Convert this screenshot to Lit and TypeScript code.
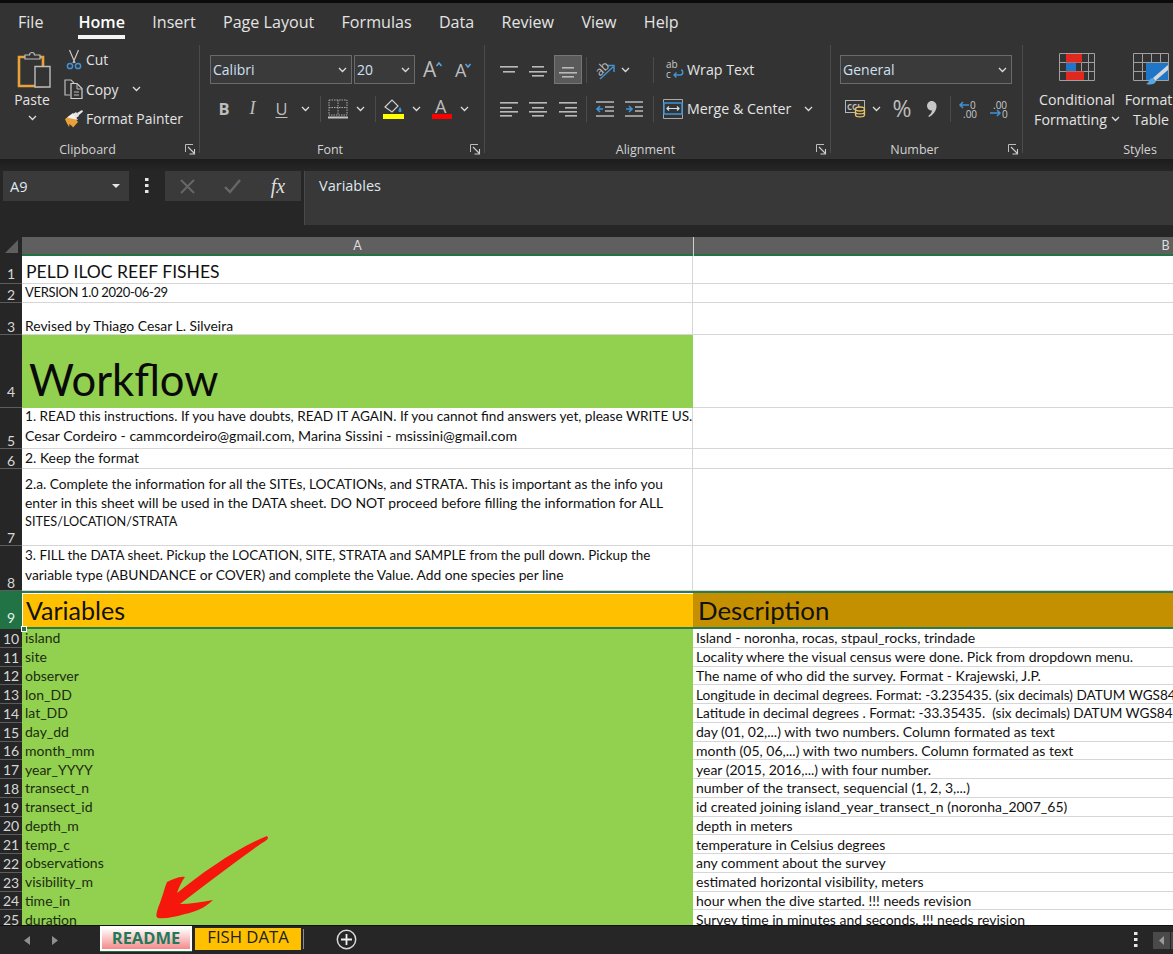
import { LitElement, html, css, svg } from "lit";
import { customElement } from "lit/decorators.js";

const chev = html`<svg class="chev" width="9" height="6" viewBox="0 0 9 6"><path d="M1 1l3.5 3.5L8 1" fill="none" stroke="#dcdcdc" stroke-width="1.3"/></svg>`;
const launcher = html`<svg width="11" height="11" viewBox="0 0 11 11"><path d="M.5 8V.5H8" fill="none" stroke="#bdbdbd"/><path d="M3 3l6 6M9.5 5v5h-5" fill="none" stroke="#cfcfcf" stroke-width="1.1"/></svg>`;

// horizontal text alignment icons, widths given per line
const lines = (rows: number[][], w = 18, h = 16, col = "#b9b9b9") => html`<svg width=${w} height=${h} viewBox="0 0 ${w} ${h}">${rows.map(
  ([y, x1, x2]) => svg`<rect x=${x1} y=${y} width=${x2 - x1} height="1.6" fill=${col}/>`
)}</svg>`;

// Each line carries its own size: the fallback font's capitals run wider than the original's
const rows = [
  { n: 1, h: 28, cls: "title", a: [["PELD ILOC REEF FISHES", 17.55]] },
  { n: 2, h: 19, cls: "tight", a: [["VERSION 1.0 2020-06-29", 13]] },
  { n: 3, h: 32, cls: "low", a: [["Revised by Thiago Cesar L. Silveira", 13.9]] },
  { n: 4, h: 73, cls: "workflow", a: [["Workflow", 43.5]] },
  { n: 5, h: 41, cls: "plain", a: [
    ["1. READ this instructions. If you have doubts, READ IT AGAIN. If you cannot find answers yet, please WRITE US.", 13.6],
    ["Cesar Cordeiro - cammcordeiro@gmail.com, Marina Sissini - msissini@gmail.com", 14.1],
  ] },
  { n: 6, h: 20, cls: "flat", a: [["2. Keep the format", 13.9]] },
  { n: 7, h: 77, cls: "tall", a: [
    ["2.a. Complete the information for all the SITEs, LOCATIONs, and STRATA. This is important as the info you", 13.73],
    ["enter in this sheet will be used in the DATA sheet. DO NOT proceed before filling the information for ALL", 13.91],
    ["SITES/LOCATION/STRATA", 12.71],
  ] },
  { n: 8, h: 45, cls: "up", a: [
    ["3. FILL the DATA sheet. Pickup the LOCATION, SITE, STRATA and SAMPLE from the pull down. Pickup the", 13.43],
    ["variable type (ABUNDANCE or COVER) and complete the Value. Add one species per line", 13.79],
  ] },
] as { n: number; h: number; cls: string; a: [string, number][] }[];

const vars: [string, string, string?][] = [
  ["island", "Island - noronha, rocas, stpaul_rocks, trindade"],
  ["site", "Locality where the visual census were done. Pick from dropdown menu."],
  ["observer", "The name of who did the survey. Format - Krajewski, J.P."],
  ["lon_DD", "Longitude in decimal degrees. Format: -3.235435. (six decimals) DATUM WGS84", "caps"],
  ["lat_DD", "Latitude in decimal degrees . Format: -33.35435.  (six decimals) DATUM WGS84", "caps"],
  ["day_dd", "day (01, 02,...) with two numbers. Column formated as text"],
  ["month_mm", "month (05, 06,...) with two numbers. Column formated as text"],
  ["year_YYYY", "year (2015, 2016,...) with four number."],
  ["transect_n", "number of the transect, sequencial (1, 2, 3,...)"],
  ["transect_id", "id created joining island_year_transect_n (noronha_2007_65)"],
  ["depth_m", "depth in meters"],
  ["temp_c", "temperature in Celsius degrees"],
  ["observations", "any comment about the survey"],
  ["visibility_m", "estimated horizontal visibility, meters"],
  ["time_in", "hour when the dive started. !!! needs revision"],
  ["duration", "Survey time in minutes and seconds. !!! needs revision"],
];

@customElement("app-root")
export class AppRoot extends LitElement {
  static styles = css`
    :host {
      display: flex;
      flex-direction: column;
      width: 1173px;
      height: 954px;
      overflow: hidden;
      background: #262626;
      font-family: "Open Sans", "Noto Sans", sans-serif;
      color: #e4e4e4;
    }
    svg { display: block; flex: none; overflow: visible; }

    /* tabs */
    .menu {
      background: #333;
      border-top: 3px solid #0a0a0a;
      height: 42px;
      display: flex;
      gap: 27.3px;
      padding-left: 18px;
      font-size: 16.1px;
      flex: none;
      box-sizing: content-box;
    }
    .menu span { padding-top: 9px; line-height: 21px; height: 33px; box-sizing: border-box; white-space: nowrap; }
    .menu .file { margin-right: 7.7px; }
    .menu .active { font-weight: 600; color: #fff; border-bottom: 4px solid #f4f4f4; height: 36px; }

    /* ribbon */
    .ribbon { display: flex; height: 114px; background: #333; overflow: hidden; flex: none; font-size: 13.9px; }
    .group { position: relative; display: flex; flex-direction: column; flex: none; box-sizing: border-box; }
    .group::after { content: ""; position: absolute; right: 0; top: 0; bottom: 6px; width: 1px; background: #4b4b4b; }
    .clip { width: 200px; }
    .font { width: 285px; }
    .align { width: 346px; }
    .num { width: 192px; }
    .styles { width: 234px; }
    .styles::after { display: none; }
    .body { height: 94px; flex: none; }
    .label { height: 20px; display: flex; align-items: center; font-size: 12.5px; color: #d2d2d2; }
    .label span { flex: 1; text-align: center; }
    .label .lz { width: 25px; flex: none; display: flex; align-items: center; }
    .label .lz svg { margin-left: 10px; }

    .clip .body { display: flex; }
    .paste { width: 62px; display: flex; flex-direction: column; align-items: center; padding-top: 4px; padding-left: 2px; box-sizing: border-box; }
    .paste svg.pic { margin-left: 4px; }
    .paste .pt { margin-top: 1px; line-height: 20px; }
    .paste .chev { margin-top: 5px; }
    .small { display: grid; grid-template-rows: 29px 30px 29px; }
    .small div { display: grid; grid-template-columns: 24px auto 16px; align-items: center; justify-items: center; justify-content: start; white-space: nowrap; }
    .small span { justify-self: start; }
    .small .chev { margin-left: 20px; }

    .tb { display: grid; align-items: center; justify-items: center; height: 29px; }
    .sep { width: 1px; height: 26px; background: #4b4b4b; }
    .sep.end { justify-self: end; }
    .font .body, .align .body, .num .body { padding-top: 10px; box-sizing: border-box; display: flex; flex-direction: column; gap: 10px; }
    .font .body { padding-left: 10px; }
    .align .body { padding-left: 9px; }
    .num .body { padding-left: 9px; }

    .tb.f1 { grid-template-columns: 142px 2px 61px 8px 19px 13px 15px; justify-items: stretch; }
    .tb.f2 { grid-template-columns: 28px 29px 29px 18px 12px 24px 20px 10px 26px 20px 32px 12px; }
    .tb.a1 { grid-template-columns: 29px 29px 31px 6px 32px 8px 25px 8px 25px 1fr; }
    .tb.a2 { grid-template-columns: 29px 29px 31px 6px 32px 26px 7px 4px 29px 1fr; }
    .tb.n2 { grid-template-columns: 24px 18px 34px 26px 10px 27px 33px; padding-left: 3px; }

    .select {
      display: flex; align-items: center; justify-content: space-between;
      height: 29px; box-sizing: border-box; padding: 0 4px 0 2px;
      background: #3a3a3a; border: 1px solid #6a6a6a; font-size: 14px; color: #cfe0f2;
    }
    .numsel { width: 172px; }
    .tb.n1 { justify-items: start; }
    .on { width: 28px; height: 29px; box-sizing: border-box; background: #5a5a5a; border: 1px solid #767676; display: flex; align-items: center; justify-content: center; }
    .btxt { font-weight: 700; font-size: 16.5px; color: #bdbdbd; }
    .itxt { font-style: italic; font-size: 18px; color: #bdbdbd; font-family: "Liberation Serif", serif; }
    .utxt { font-size: 16.5px; color: #bdbdbd; text-decoration: underline; text-underline-offset: 2px; }
    .pct { font-size: 23px; color: #bdbdbd; line-height: 1; }
    .lbl { justify-self: start; white-space: nowrap; display: flex; align-items: center; font-size: 14.2px; }
    .merge .chev { margin-left: 13px; }
    .cols { display: flex; justify-content: flex-start; padding-left: 7px; }
    .big { display: flex; flex-direction: column; align-items: center; font-size: 14.2px; line-height: 19.5px; white-space: nowrap; }
    .big svg.pic { margin: 8px 0 9px; }
    .big.cf { width: 94px; }
    .big.ft { width: 54px; }
    .big.ft svg.pic { margin-bottom: 4px; }
    .big.ft .chev { margin-right: -13px; }
    .big.ft .fm { margin-right: 5px; }
    .big span { display: flex; align-items: center; gap: 4px; }

    /* formula bar */
    .shade { height: 12px; background: linear-gradient(#1c1c1c, #262626); flex: none; }
    .fbar { height: 54px; display: flex; flex: none; padding-left: 3px; }
    .name { width: 126px; height: 30px; background: #3a3a3a; display: flex; align-items: center; justify-content: space-between; box-sizing: border-box; padding: 0 9px 0 7px; font-size: 14.5px; color: #dfeaf5; }
    .dots { width: 36px; height: 30px; display: flex; align-items: center; justify-content: center; }
    .fx { width: 136px; height: 30px; background: #3a3a3a; display: grid; grid-template-columns: 44px 46px 46px; align-items: center; justify-items: center; font-family: "Liberation Serif", serif; font-style: italic; font-size: 20px; color: #dedede; }
    .input { flex: 1; margin-left: 3px; background: #383838; font-size: 14.5px; padding: 5px 0 0 14px; color: #dfe6ee; line-height: 20px; border-left: 1px solid #4a4a4a; }
    .gap { height: 12px; flex: none; }

    /* sheet */
    .sheet { position: relative; flex: 1; min-height: 0; overflow: hidden; background: #fff; font-family: Lato, "Liberation Sans", sans-serif; color: #111; }
    .colhead { display: grid; grid-template-columns: 22px 671px 944px; height: 19px; background: #5f5f5f; font-size: 12.5px; color: #ddd; box-shadow: inset 0 -2px 0 #217346; text-align: center; line-height: 17px; }
    .corner { background: #262626; display: flex; align-items: center; justify-content: center; height: 19px; }
    .colhead .b { border-left: 1px solid #cfcfcf; }
    .row { display: grid; grid-template-columns: 22px 671px 944px; box-sizing: border-box; }
    .rh { background: #262626; color: #d6d6d6; font-size: 14px; display: flex; align-items: flex-end; justify-content: center; box-sizing: border-box; border-bottom: 1px solid #5c5c5c; line-height: 15px; }
    .cell { box-sizing: border-box; border-bottom: 1px solid #d6d6d6; border-right: 1px solid #d6d6d6; padding: 0 0 0 3px; display: flex; align-items: flex-end; white-space: pre; font-size: 14px; line-height: 19px; overflow: hidden; }
    .cell.caps { font-size: 13.6px; }
    .cell.plain { padding-bottom: 3px; }
    .cell.flat { padding-bottom: 1px; }
    .cell.tight { padding-bottom: 1px; line-height: 17px; letter-spacing: -0.34px; }
    .cell.low { padding-bottom: 1px; line-height: 15px; }
    .cell.up { padding-bottom: 6px; }
    .cell.title { padding-left: 4px; line-height: 22px; }
    .cell.tall { padding-bottom: 14px; }
    .cell.workflow { background: #92d050; line-height: 50px; padding: 0 0 3px 7px; border-color: #92d050; color: #0a0a0a; }
    .r1 .rh { padding-bottom: 2px; }
    .r4 .rh { padding-bottom: 8px; }
    .sel { height: 38px; position: relative; }
    .sel .rh { background: #217346; color: #e6f2ec; border-bottom: 0; padding-bottom: 4px; }
    .sel .cell { font-size: 25px; padding: 0 0 0 4px; border-top: 2px solid #2a7a52; border-bottom: 2px solid #2a7a52; border-right: 0; line-height: 32px; color: #111; align-items: center; }
    .sel .a { background: #ffc000; box-shadow: inset 1px 0 0 #fff, inset 0 1px 0 #fff; }
    .sel .d { background: #c59000; padding-left: 5px; font-size: 25.8px; }
    .handle { position: absolute; left: 21px; bottom: -3px; width: 6px; height: 6px; background: #217346; border: 1px solid #fff; box-sizing: border-box; }
    .v { height: 18.75px; }
    .v .a { background: #92d050; border-color: #92d050; color: #1c2c10; }
    .v .cell { line-height: 18px; padding-top: 1px; align-items: center; }
    .v .rh { align-items: center; padding-top: 1px; }
    .arrow { position: absolute; left: 0; top: 0; pointer-events: none; }

    /* bottom tabs */
    .tabs { height: 29px; flex: none; display: flex; align-items: flex-start; background: #262626; position: relative; border-top: 1px solid #111; box-sizing: border-box; font-size: 16.7px; }
    .nav { width: 100px; height: 28px; display: grid; grid-template-columns: 30px 28px; align-items: center; justify-items: end; flex: none; }
    .readme { width: 92px; height: 25px; box-sizing: border-box; border: 2px solid #fff; background: linear-gradient(#fff, #f48a8a); color: #1f7a5a; font-weight: 700; font-size: 16.5px; text-align: center; line-height: 19px; box-shadow: 0 1px 0 #217346; flex: none; }
    .fish { margin: 2px 0 0 3px; width: 106px; height: 22px; background: #ffc000; color: #222; text-align: center; line-height: 17px; flex: none; }
    .tsep { width: 1px; height: 20px; margin: 3px 0 0 2px; background: #8d8d8d; flex: none; }
    .plus { margin: 3px 0 0 32px; flex: none; }
    .tright { margin-left: auto; display: flex; align-items: center; height: 28px; }
    .tright .tdots { margin-right: 15px; }
    .sbtn { width: 17px; height: 17px; background: #4a4a4a; display: flex; align-items: center; justify-content: center; margin-right: 1px; }
    .sbtn2 { width: 2px; height: 17px; background: #4a4a4a; }
  `;

  private ribbon() {
    return html`<div class="ribbon">
      <div class="group clip">
        <div class="body">
          <div class="paste">
            <svg class="pic" width="36" height="40" viewBox="0 0 36 40"><path d="M3 8h24v29H3z" fill="#333" stroke="#e9a23b" stroke-width="2.6"/><path d="M9 10V6h4.5a2.5 2.5 0 0 1 5 0H24v4z" fill="#333" stroke="#bdbdbd" stroke-width="1.2"/><path d="M19 17.5h15V38H19z" fill="#333" stroke="#bdbdbd" stroke-width="1.4"/></svg>
            <span class="pt">Paste</span>
            ${chev}
          </div>
          <div class="small">
            <div>
              <svg width="16" height="21" viewBox="0 0 16 21"><path d="M3.5 1l5.5 13M12.5 1L7 14" fill="none" stroke="#c9c9c9" stroke-width="1.2"/><circle cx="4" cy="17" r="2.6" fill="none" stroke="#3f93d6" stroke-width="1.5"/><circle cx="12" cy="17" r="2.6" fill="none" stroke="#3f93d6" stroke-width="1.5"/></svg>
              <span>Cut</span>
            </div>
            <div>
              <svg width="20" height="20" viewBox="0 0 20 20"><path d="M6 16H1V1h6l3 3" fill="none" stroke="#bdbdbd" stroke-width="1.2"/><path d="M7 4.5h6l5 5v10H7z" fill="#333" stroke="#d0d0d0" stroke-width="1.2"/><path d="M13 5v5h5M10 13h5M10 16h5" fill="none" stroke="#bdbdbd"/></svg>
              <span>Copy</span>
              ${chev}
            </div>
            <div>
              <svg width="20" height="19" viewBox="0 0 20 19"><path d="M1 10l7-5 6 8-5 5.5c-1-2-3-3-4-3.5 1 2 0 3 0 3C4 16 2 13 1 10z" fill="#e9a23b"/><path d="M3 8.5l6-4.500 5 7" fill="#f2f2f2"/><path d="M9 5l3-2 3 4-3 2zM13 4l5-3 1 1.500-4.500 4" fill="#e6e6e6"/></svg>
              <span>Format Painter</span>
            </div>
          </div>
        </div>
        <div class="label"><span>Clipboard</span><div class="lz">${launcher}</div></div>
      </div>

      <div class="group font">
        <div class="body">
          <div class="tb f1">
            <div class="select"><span>Calibri</span>${chev}</div>
            <i></i>
            <div class="select"><span>20</span>${chev}</div>
            <i></i>
            <svg width="20" height="18" viewBox="0 0 20 18"><text x="0" y="16" font-size="21" fill="#bdbdbd" font-family="Open Sans">A</text><path d="M13.500 5l2.500-3 2.500 3" fill="none" stroke="#58a6e0" stroke-width="1.500"/></svg>
            <i></i>
            <svg width="16" height="16" viewBox="0 0 16 16"><text x="0" y="15" font-size="18" fill="#bdbdbd" font-family="Open Sans">A</text><path d="M10.500 2l2.500 3 2.500-3" fill="none" stroke="#58a6e0" stroke-width="1.500"/></svg>
          </div>
          <div class="tb f2">
            <span class="btxt">B</span>
            <span class="itxt">I</span>
            <span class="utxt">U</span>
            ${chev}
            <i class="sep"></i>
            <svg width="20" height="20" viewBox="0 0 20 20"><path d="M1 1h18v15H1zM10 1v15M1 8.500h18" fill="none" stroke="#a9a9a9" stroke-dasharray="1.500 1"/><rect y="17.500" width="20" height="2" fill="#c4c4c4"/></svg>
            ${chev}
            <i class="sep"></i>
            <svg width="21" height="20" viewBox="0 0 21 20"><path d="M2 8l7-7 6 6-6 6z" fill="none" stroke="#d0d0d0" stroke-width="1.200"/><path d="M17 8c2 3 2 5 0 5s-2-2 0-5" fill="#3f93d6"/><rect y="15" width="21" height="5" fill="#ffff00"/></svg>
            ${chev}
            <svg width="20" height="20" viewBox="0 0 20 20"><text x="3" y="13.500" font-size="18" fill="#bdbdbd" font-family="Open Sans">A</text><rect y="15" width="20" height="5" fill="#ff0000"/></svg>
            ${chev}
          </div>
        </div>
        <div class="label"><span>Font</span><div class="lz">${launcher}</div></div>
      </div>

      <div class="group align">
        <div class="body">
          <div class="tb a1">
            ${lines([[3, 0, 18], [8, 3, 15]], 18, 14)}
            ${lines([[4, 3, 15], [9, 0, 18], [13, 3, 15]], 18, 16)}
            <div class="on">${lines([[5, 3, 15], [10, 0, 18], [14, 3, 15]], 18, 16)}</div>
            <i class="sep"></i>
            <svg width="21" height="20" viewBox="0 0 21 20"><text x="0" y="13" font-size="12.500" fill="#bdbdbd" font-family="Open Sans" transform="rotate(-45 7 9)">ab</text><path d="M5 19L18 7M13 5.500h6V12" fill="none" stroke="#3f93d6" stroke-width="1.500"/></svg>
            ${chev}
            <i class="sep end"></i>
            <i></i>
            <svg width="18" height="19" viewBox="0 0 18 19"><text x="0" y="8" font-size="10" fill="#c9c9c9" font-family="Open Sans">ab</text><text x="0" y="18" font-size="10" fill="#c9c9c9" font-family="Open Sans">c</text><path d="M8 15h6c4 0 3-5 1-5M10.500 12.500L8 15l2.500 2.500" fill="none" stroke="#3f93d6" stroke-width="1.400"/></svg>
            <span class="lbl">Wrap Text</span>
          </div>
          <div class="tb a2">
            ${lines([[1, 0, 18], [6, 0, 12], [10, 0, 18], [14, 0, 12]])}
            ${lines([[1, 0, 18], [6, 3, 15], [10, 0, 18], [14, 3, 15]])}
            ${lines([[1, 0, 18], [6, 6, 18], [10, 0, 18], [14, 6, 18]])}
            <i class="sep"></i>
            <svg width="18" height="16" viewBox="0 0 18 16"><path d="M0 1h18M9 6h9M9 10h9M0 15h18" stroke="#b9b9b9" stroke-width="1.500"/><path d="M7 8H1M4 5L1 8l3 3" fill="none" stroke="#3f93d6" stroke-width="1.600"/></svg>
            <svg width="18" height="16" viewBox="0 0 18 16"><path d="M0 1h18M10 6h8M10 10h8M0 15h18" stroke="#b9b9b9" stroke-width="1.500"/><path d="M1 8h6M4 5l3 3-3 3" fill="none" stroke="#3f93d6" stroke-width="1.600"/></svg>
            <i class="sep end"></i>
            <i></i>
            <svg width="20" height="20" viewBox="0 0 20 20"><path d="M.5.500h19v19H.5z" fill="none" stroke="#a9a9a9"/><rect x="1" y="4" width="18" height="11" fill="none" stroke="#3f93d6" stroke-width="1.500"/><path d="M4 9.500h12M6 7.500l-2 2 2 2M14 7.500l2 2-2 2" fill="none" stroke="#cfe0f2" stroke-width="1.200"/></svg>
            <span class="lbl merge">Merge &amp; Center${chev}</span>
          </div>
        </div>
        <div class="label"><span>Alignment</span><div class="lz">${launcher}</div></div>
      </div>

      <div class="group num">
        <div class="body">
          <div class="tb n1"><div class="select numsel"><span>General</span>${chev}</div></div>
          <div class="tb n2">
            <svg width="21" height="17" viewBox="0 0 21 17"><rect x=".5" y=".5" width="19" height="12" fill="none" stroke="#b5b5b5"/><text x="2" y="10" font-size="8" font-weight="700" fill="#bdbdbd" font-family="Open Sans">CCI</text><path d="M10.500 9v6c0 2.500 9 2.500 9 0V9M10.500 12c0 2.500 9 2.500 9 0" fill="#333" stroke="#e8c46a" stroke-width="1.300"/><ellipse cx="15" cy="9" rx="4.500" ry="2" fill="#333" stroke="#e8c46a" stroke-width="1.300"/></svg>
            ${chev}
            <span class="pct">%</span>
            <svg width="10" height="16" viewBox="0 0 10 16"><path d="M4.500 0C7.500 0 10 2.500 9.500 6c-.4 4-3.500 8-7.500 10l-.7-1c2-1.500 3.500-3.500 3.700-5.500C2 9.500 0 7.500 0 5s2-5 4.500-5z" fill="#c6c6c6"/></svg>
            <i class="sep"></i>
            <svg width="20" height="18" viewBox="0 0 20 18"><text x="11" y="9" font-size="10" fill="#c9c9c9" font-family="Open Sans">0</text><text x="4" y="18" font-size="10" fill="#c9c9c9" font-family="Open Sans">.00</text><path d="M10 5H1M4 2L1 5l3 3" fill="none" stroke="#3f93d6" stroke-width="1.500"/></svg>
            <svg width="20" height="18" viewBox="0 0 20 18"><text x="4" y="9" font-size="10" fill="#c9c9c9" font-family="Open Sans">.00</text><text x="13" y="18" font-size="10" fill="#c9c9c9" font-family="Open Sans">0</text><path d="M1 13h10M8 10l3 3-3 3" fill="none" stroke="#3f93d6" stroke-width="1.500"/></svg>
          </div>
        </div>
        <div class="label"><span>Number</span><div class="lz">${launcher}</div></div>
      </div>

      <div class="group styles">
        <div class="body cols">
          <div class="big cf">
            <svg class="pic" width="36" height="28" viewBox="0 0 36 28"><path d="M.5.500h35v27H.5zM7.500.500v27M14.500.500v27M22.500.500v27M29.500.500v27M.5 9.500h35M.5 18.500h35" fill="none" stroke="#a0a0a0"/><rect x="7" y="1" width="16" height="8.500" fill="#e0281e"/><rect x="7" y="10" width="10" height="8" fill="#1f76c9"/><rect x="7" y="18.500" width="18" height="8.500" fill="#e0281e"/></svg>
            <span>Conditional</span>
            <span>Formatting ${chev}</span>
          </div>
          <div class="big ft">
            <svg class="pic" width="36" height="33" viewBox="0 0 36 33"><path d="M.5.500h35v27H.5zM9.500.500v27M18.500.500v27M27.500.500v27M.5 9.500h35M.5 18.500h35" fill="none" stroke="#a0a0a0"/><rect x="13" y="10" width="22" height="17" fill="#1f76c9"/><path d="M35 12L20 25l2 3 13-11z" fill="#d8d8d8"/><path d="M20 25c-4 0-3 4-7 6 4 1 9 1 10-3z" fill="#58a6e0"/></svg>
            <span class="fm">Format</span>
            <span>Table ${chev}</span>
          </div>
        </div>
        <div class="label"><span>Styles</span></div>
      </div>
    </div>`;
  }

  private formula() {
    return html`<div class="shade"></div>
      <div class="fbar">
        <div class="name"><span>A9</span><svg width="8" height="4" viewBox="0 0 8 4"><path d="M0 0h8L4 4z" fill="#e6e6e6"/></svg></div>
        <div class="dots"><svg width="4" height="16" viewBox="0 0 4 16"><path d="M0 0h3.500v3H0zM0 6h3.500v3H0zM0 12h3.500v3H0z" fill="#e6e6e6"/></svg></div>
        <div class="fx">
          <svg width="15" height="15" viewBox="0 0 15 15"><path d="M1 1l13 13M14 1L1 14" stroke="#676767" stroke-width="2"/></svg>
          <svg width="17" height="14" viewBox="0 0 17 14"><path d="M1 8l5 5L16 1" fill="none" stroke="#676767" stroke-width="2.400"/></svg>
          <span>fx</span>
        </div>
        <div class="input">Variables</div>
      </div>
      <div class="gap"></div>`;
  }

  private sheet() {
    return html`<div class="sheet">
      <div class="colhead">
        <div class="corner"><svg width="13" height="13" viewBox="0 0 13 13"><path d="M13 0v13H0z" fill="#5f5f5f"/></svg></div>
        <div>A</div>
        <div class="b">B</div>
      </div>
      ${rows.map(
        (r) => html`<div class="row r${r.n}" style="height:${r.h}px">
          <div class="rh">${r.n}</div>
          <div class="cell ${r.cls}"><div>${r.a.map(([t, fs]) => html`<div style="font-size:${fs}px">${t}</div>`)}</div></div>
          <div class="cell"></div>
        </div>`
      )}
      <div class="row sel">
        <div class="rh">9</div>
        <div class="cell a">Variables</div>
        <div class="cell d">Description</div>
        <div class="handle"></div>
      </div>
      ${vars.map(
        ([a, b, cls], i) => html`<div class="row v">
          <div class="rh">${i + 10}</div>
          <div class="cell a">${a}</div>
          <div class="cell ${cls ?? ""}">${b}</div>
        </div>`
      )}
      <svg class="arrow" width="300" height="700" viewBox="0 237 300 700"><path d="M267 836c2 2 1 4-5 7-22 15-57 42-82 61 10 0 22-2 33-4-8 8-18 12-28 14-10 3-20 5-27 4-3-1-1-6 0-10 5-12 6-19 9-26 5-2 12-6 18-5-3 4-6 10-8 16 25-20 60-45 90-57z" fill="#f5170c"/></svg>
    </div>`;
  }

  private tabs() {
    return html`<div class="tabs">
      <div class="nav">
        <svg width="6" height="9" viewBox="0 0 6 9"><path d="M6 0v9L0 4.500z" fill="#8f8f8f"/></svg>
        <svg width="6" height="9" viewBox="0 0 6 9"><path d="M0 0v9l6-4.500z" fill="#8f8f8f"/></svg>
      </div>
      <div class="readme">README</div>
      <div class="fish">FISH DATA</div>
      <div class="tsep"></div>
      <svg class="plus" width="21" height="21" viewBox="0 0 21 21"><circle cx="10.500" cy="10.500" r="9.200" fill="none" stroke="#d8d8d8" stroke-width="1.500"/><path d="M10.500 5v11M5 10.500h11" stroke="#f0f0f0" stroke-width="1.800"/></svg>
      <div class="tright">
        <svg class="tdots" width="4" height="16" viewBox="0 0 4 16"><path d="M0 0h3.500v3H0zM0 6h3.500v3H0zM0 12h3.500v3H0z" fill="#e6e6e6"/></svg>
        <div class="sbtn"><svg width="5" height="9" viewBox="0 0 5 9"><path d="M5 0v9L0 4.500z" fill="#9a9a9a"/></svg></div>
        <div class="sbtn2"></div>
      </div>
    </div>`;
  }

  render() {
    return html`<div class="menu">
        <span class="file">File</span><span class="active">Home</span><span>Insert</span><span>Page Layout</span><span>Formulas</span><span>Data</span><span>Review</span><span>View</span><span>Help</span>
      </div>
      ${this.ribbon()} ${this.formula()} ${this.sheet()} ${this.tabs()}`;
  }
}
